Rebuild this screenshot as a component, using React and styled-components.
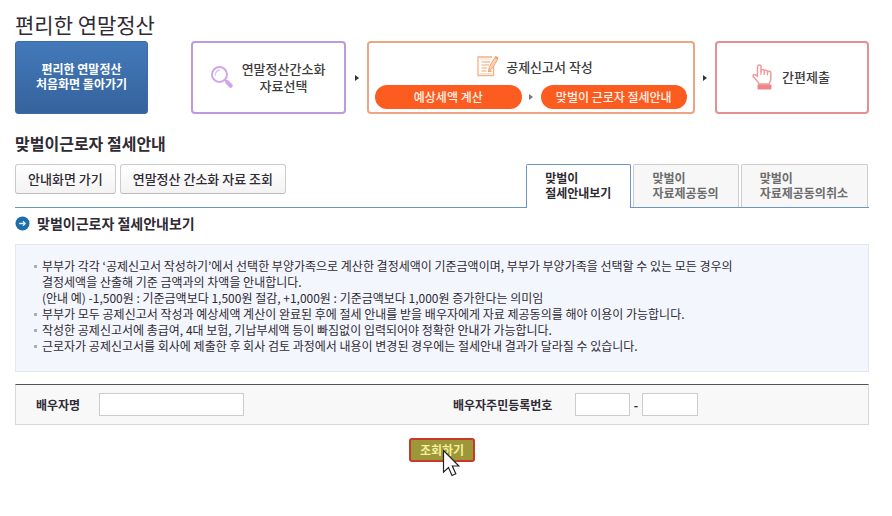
import styled, { createGlobalStyle } from "styled-components";

const notices = [
  [
    "부부가 각각 ‘공제신고서 작성하기’에서 선택한 부양가족으로 계산한 결정세액이 기준금액이며, 부부가 부양가족을 선택할 수 있는 모든 경우의",
    "결정세액을 산출해 기준 금액과의 차액을 안내합니다.",
    "(안내 예) -1,500원 : 기준금액보다 1,500원 절감, +1,000원 : 기준금액보다 1,000원 증가한다는 의미임",
  ],
  ["부부가 모두 공제신고서 작성과 예상세액 계산이 완료된 후에 절세 안내를 받을 배우자에게 자료 제공동의를 해야 이용이 가능합니다."],
  ["작성한 공제신고서에 총급여, 4대 보험, 기납부세액 등이 빠짐없이 입력되어야 정확한 안내가 가능합니다."],
  ["근로자가 공제신고서를 회사에 제출한 후 회사 검토 과정에서 내용이 변경된 경우에는 절세안내 결과가 달라질 수 있습니다."],
];

const tabs = [
  { top: "맞벌이", bottom: "절세안내보기", active: true },
  { top: "맞벌이", bottom: "자료제공동의" },
  { top: "맞벌이", bottom: "자료제공동의취소" },
];

const SearchIcon = () => (
  <svg width="24" height="24" viewBox="0 0 24 24" fill="none" aria-hidden="true">
    <circle cx="9.5" cy="9.5" r="7.5" stroke="#cfa6ea" strokeWidth="2" />
    <path d="M5.5 10a4.5 4.5 0 0 1 4-5" stroke="#dcc0f0" strokeWidth="1.3" strokeLinecap="round" />
    <path d="M15 15l1.8 1.8" stroke="#cfa6ea" strokeWidth="2" />
    <path d="M17.3 17.3l3.4 3.4" stroke="#cfa6ea" strokeWidth="4.2" strokeLinecap="round" />
  </svg>
);

const DocumentIcon = () => (
  <svg width="22" height="22" viewBox="0 0 22 22" fill="none" aria-hidden="true">
    <path d="M15 2H1v18.500h15.500V11" stroke="#f5b083" strokeWidth="1.300" />
    <path d="M3 4h11M3 18.500h12" stroke="#fbdcc4" strokeWidth="1.200" />
    <path d="M4.500 7h8.500M4.500 10h7.500M4.500 13h5.500M4.500 16h5" stroke="#f3a473" strokeWidth="1.200" />
    <path d="M11.500 15.500l1-4 5.500-9 2.800 1.700-5.600 9z" fill="#fbd3b5" stroke="#f2a06c" />
    <path d="M17.500 2.500l1-1.700 3 1.700-1 1.800z" fill="#f2a06c" />
    <path d="M11 16.500l3.500-.5" stroke="#f2a06c" strokeWidth="1.400" />
  </svg>
);

const HandIcon = () => (
  <svg width="22" height="26" viewBox="0 0 22 26" fill="none" aria-hidden="true">
    <path
      d="M6.500 20v-1.500L1.300 12.800c-.8-1 .2-2.700 1.700-2.100l2.500 1.700V2.800c0-2.400 3.500-2.400 3.500 0v5V6.800c0-1.700 3.300-1.700 3.300.2v1.200V7.400c0-1.700 3.200-1.600 3.200.2v1.300V8.400c0-1.600 3.300-1.600 3.300.3v6.500c0 1.600-1.300 2.500-1.300 3.800v1z"
      stroke="#f09a9c"
      strokeWidth="1.500"
      strokeLinejoin="round"
    />
    <path d="M9 7v4M12.300 8v3M15.500 9v2.500" stroke="#f09a9c" strokeWidth="1.200" />
    <rect x="5.500" y="20.500" width="14" height="5" rx="1" fill="#ee8588" />
  </svg>
);

const BulletIcon = () => (
  <svg width="15" height="15" viewBox="0 0 15 15" fill="none" aria-hidden="true">
    <circle cx="7.500" cy="7.500" r="7" fill="#1c6da8" />
    <path d="M4.200 7.500h6M8 5.300l2.200 2.200L8 9.700" stroke="#d8ebf8" strokeWidth="1.300" />
  </svg>
);

const App = () => {
  return (
    <>
      <GlobalStyle />
      <Page>
        <Title>편리한 연말정산</Title>
        <Steps>
          <HomeButton type="button">
            <span>편리한 연말정산</span>
            <span>처음화면 돌아가기</span>
          </HomeButton>
          <span />
          <Step $color="#bf99dd">
            <SearchIcon />
            <StepName>
              연말정산간소화
              <br />
              자료선택
            </StepName>
          </Step>
          <Arrow />
          <StepGroup $color="#eda685">
            <StepHead>
              <DocumentIcon />
              <StepName>공제신고서 작성</StepName>
            </StepHead>
            <Pills>
              <Pill type="button">예상세액 계산</Pill>
              <Arrow $light />
              <Pill type="button">맞벌이 근로자 절세안내</Pill>
            </Pills>
          </StepGroup>
          <Arrow />
          <Step $color="#e58f92">
            <HandIcon />
            <StepName>간편제출</StepName>
          </Step>
        </Steps>

        <Heading>맞벌이근로자 절세안내</Heading>
        <NavRow>
          <Actions>
            <ActionButton type="button">안내화면 가기</ActionButton>
            <ActionButton type="button">연말정산 간소화 자료 조회</ActionButton>
          </Actions>
          <Tabs>
            {tabs.map((tab) => (
              <Tab key={tab.bottom} href="#" $active={tab.active}>
                <span>{tab.top}</span>
                <span>{tab.bottom}</span>
              </Tab>
            ))}
          </Tabs>
        </NavRow>

        <SubHeading>
          <BulletIcon />
          맞벌이근로자 절세안내보기
        </SubHeading>
        <NoticeBox>
          {notices.map((lines) => (
            <Notice key={lines[0]}>
              {lines.map((line) => (
                <NoticeLine key={line}>{line}</NoticeLine>
              ))}
            </Notice>
          ))}
        </NoticeBox>

        <form onSubmit={(e) => e.preventDefault()}>
          <Fields>
            <Field $indent={20}>
              <Label htmlFor="spouse-name" $width={63}>배우자명</Label>
              <Input id="spouse-name" type="text" $width={145} />
            </Field>
            <Field $indent={11}>
              <Label htmlFor="spouse-id-front" $width={122}>배우자주민등록번호</Label>
              <Input id="spouse-id-front" type="text" maxLength={6} $width={55} />
              <Dash>-</Dash>
              <Input type="password" aria-label="배우자주민등록번호 뒷자리" maxLength={7} $width={56} />
            </Field>
          </Fields>
          <SubmitRow>
            <SubmitButton type="submit">
              조회하기
              <Cursor viewBox="0 0 18 28" aria-hidden="true">
                <path d="M1.500 1.500v21.700l5-4.700 3.500 8 3.800-1.700-3.500-7.800h6.600z" fill="#fff" stroke="#222" strokeWidth="1.200" />
              </Cursor>
            </SubmitButton>
          </SubmitRow>
        </form>
      </Page>
    </>
  );
};

const GlobalStyle = createGlobalStyle`
  * {
    box-sizing: border-box;
  }

  body {
    margin: 0;
    background: #fff;
    color: #2f2a33;
    font-family: "Noto Sans CJK KR", sans-serif;
    font-size: 12px;
  }

  button, input {
    font-family: inherit;
  }

  svg {
    flex-shrink: 0;
  }
`;

const Page = styled.main`
  padding: 12px 23px 40px 15px;
`;

const Title = styled.h1`
  margin: 0 0 5px;
  font-size: 21px;
  font-weight: 400;
  line-height: 24px;
`;

const Steps = styled.div`
  display: grid;
  grid-template-columns: 133fr 43px 155fr 21px 328fr 20px 154fr;
  align-items: stretch;
  min-height: 73px;
`;

const HomeButton = styled.button`
  display: flex;
  flex-direction: column;
  align-items: center;
  justify-content: center;
  padding: 0 0 4px;
  border: 1px solid #3a6ba8;
  border-radius: 3px;
  background: linear-gradient(#4379ba, #35639c);
  color: #fff;
  font-size: 12px;
  font-weight: 700;
  line-height: 15px;
`;

const Step = styled.div`
  display: flex;
  align-items: center;
  justify-content: center;
  gap: 8px;
  padding: 0 2px 2px 0;
  border: 2px solid ${(props) => props.$color};
  border-radius: 4px;
`;

const StepGroup = styled(Step)`
  flex-direction: column;
  justify-content: flex-end;
  padding: 0 6px 3px;
`;

const StepHead = styled.div`
  display: flex;
  align-items: center;
  gap: 7px;
  padding-left: 8px;
`;

const StepName = styled.span`
  color: #3c3c3c;
  font-size: 13px;
  font-weight: 500;
  line-height: 17px;
  text-align: center;
`;

const Pills = styled.div`
  display: flex;
  align-items: center;
  width: 100%;
`;

const Pill = styled.button`
  flex: 1;
  height: 24px;
  padding: 0;
  border: 0;
  border-radius: 12px;
  background: #fc5c20;
  color: #fff3ea;
  font-size: 12px;
  font-weight: 500;
  line-height: 24px;
`;

const Arrow = styled.span`
  display: flex;
  align-items: center;
  justify-content: center;
  width: ${(props) => (props.$light ? "19px" : "auto")};

  &::after {
    content: "";
    border: 3px solid transparent;
    border-left: 4px solid ${(props) => (props.$light ? "#777" : "#333")};
    border-right: 0;
  }
`;

const Heading = styled.h2`
  margin: 19px 0 11px;
  font-size: 16px;
  font-weight: 700;
  line-height: 20px;
`;

const NavRow = styled.div`
  display: flex;
  justify-content: space-between;
  border-bottom: 1px solid #6b95c2;
`;

const Actions = styled.div`
  display: flex;
  align-items: flex-start;
  gap: 4px;
`;

const ActionButton = styled.button`
  height: 30px;
  padding: 0 12px 1px;
  border: 1px solid #ccc;
  border-bottom-color: #bbb;
  border-radius: 3px;
  background: linear-gradient(#fff, #f3f3f3);
  color: #2f2a33;
  font-size: 13px;
  font-weight: 500;
`;

const Tabs = styled.nav`
  display: flex;
  gap: 2px;
  padding-right: 1px;
`;

const Tab = styled.a`
  display: flex;
  flex-direction: column;
  height: ${(props) => (props.$active ? "44px" : "43px")};
  margin-bottom: ${(props) => (props.$active ? "-1px" : "0")};
  padding: 5px 19px 0 18px;
  border: 1px solid ${(props) => (props.$active ? "#6b95c2" : "#ccc")};
  border-bottom: 0;
  border-radius: 2px 2px 0 0;
  background: ${(props) => (props.$active ? "#fff" : "#f7f7f7")};
  color: ${(props) => (props.$active ? "#2f2a33" : "#6c6c6c")};
  font-size: 12px;
  font-weight: 700;
  line-height: 15px;
  text-decoration: none;
`;

const SubHeading = styled.h3`
  display: flex;
  align-items: center;
  gap: 7px;
  margin: 5px 0 11px;
  font-size: 14px;
  font-weight: 700;
  line-height: 20px;
`;

const NoticeBox = styled.ul`
  margin: 0;
  padding: 13px 18px 17px;
  border: 1px solid #e3e7ee;
  background: #f3f6fd;
  list-style: none;
`;

const Notice = styled.li`
  display: grid;
  grid-template-columns: 8px 1fr;
  line-height: 16px;

  &::before {
    content: "";
    width: 3px;
    height: 3px;
    margin-top: 7px;
    background: #aaaeb8;
  }
`;

const NoticeLine = styled.span`
  grid-column: 2;
`;

const Fields = styled.div`
  display: grid;
  grid-template-columns: 1fr 1fr;
  margin-top: 12px;
  padding: 8px 0;
  border: 1px solid #d8d8d8;
  border-top-color: #555;
  background: #f8f8f8;
`;

const Field = styled.div`
  display: flex;
  align-items: center;
  padding-left: ${(props) => props.$indent}px;
`;

const Label = styled.label`
  width: ${(props) => props.$width}px;
  font-weight: 700;
  line-height: 16px;
`;

const Input = styled.input`
  width: ${(props) => props.$width}px;
  height: 23px;
  padding: 0 4px;
  border: 1px solid #ccc;
  background: #fff;
  font-size: 12px;
`;

const Dash = styled.span`
  width: 12px;
  font-weight: 700;
  text-align: center;
`;

const SubmitRow = styled.div`
  display: flex;
  justify-content: center;
  margin-top: 13px;
`;

const SubmitButton = styled.button`
  position: relative;
  width: 66px;
  height: 24px;
  padding: 0;
  border: 2px solid #c8392b;
  border-radius: 3px;
  background: #9c9738;
  color: #f6ee9c;
  font-size: 12px;
  font-weight: 700;
  line-height: 18px;
`;

const Cursor = styled.svg`
  position: absolute;
  top: 9px;
  left: 31px;
  width: 18px;
  height: 28px;
`;

export default App;
